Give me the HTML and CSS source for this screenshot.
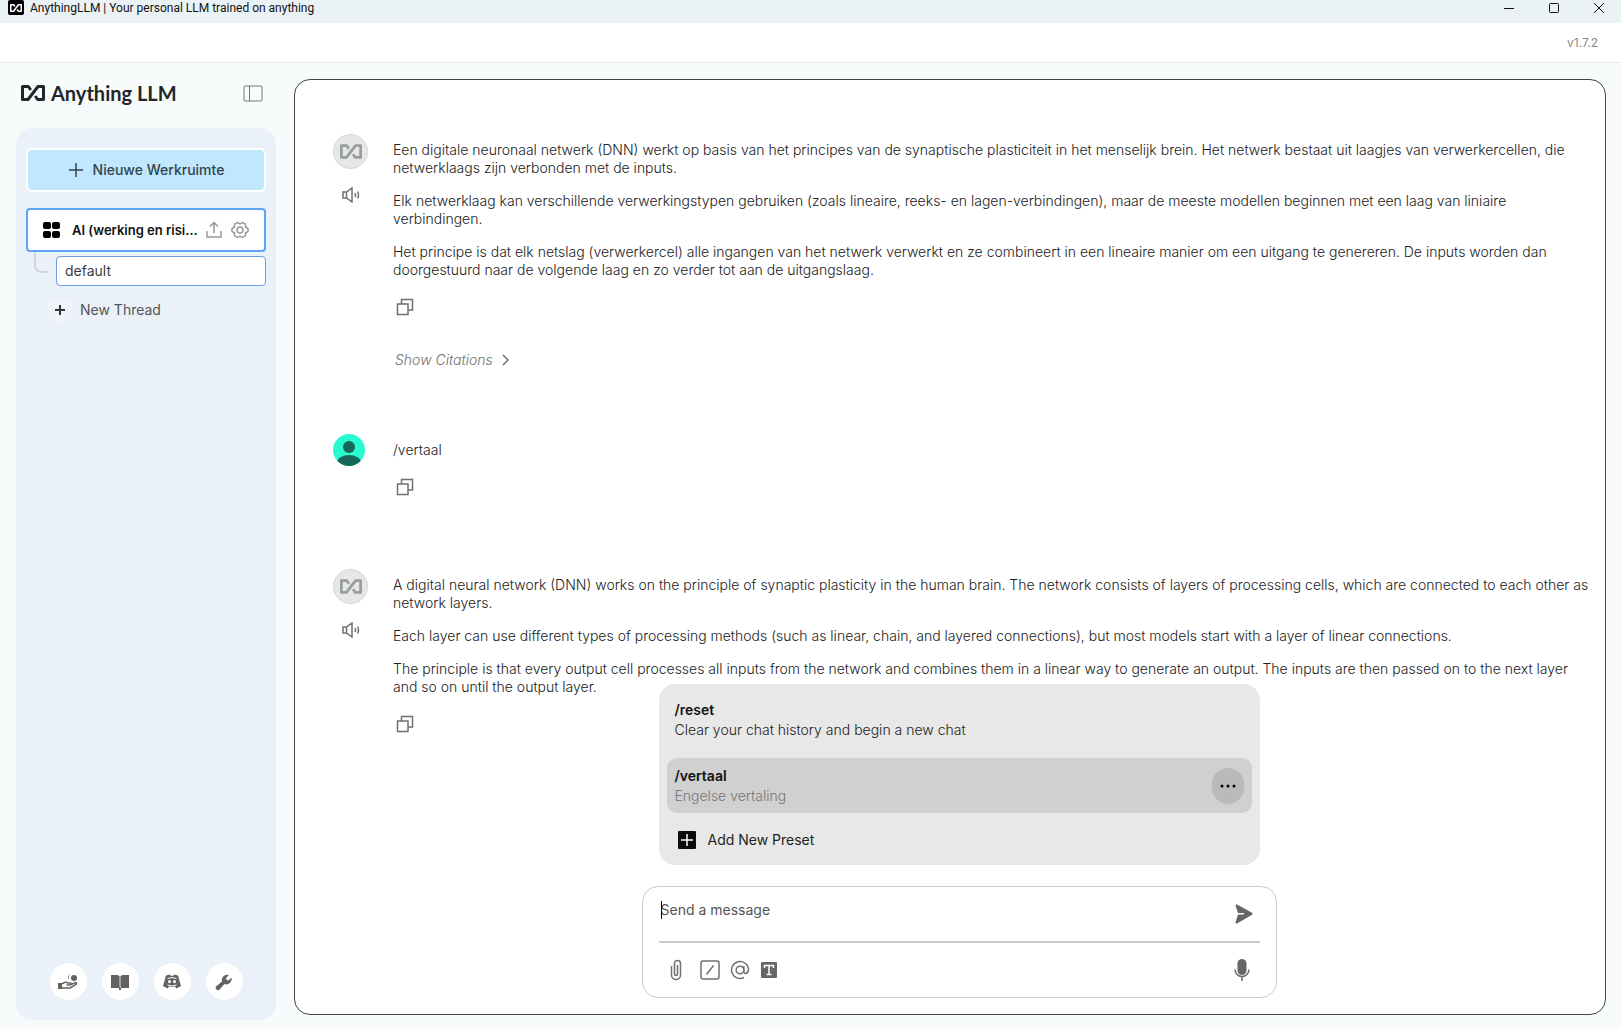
FILE: index.html
```html
<!DOCTYPE html>
<html lang="nl">
<head>
  <meta charset="UTF-8" />
  <meta name="viewport" content="width=device-width, initial-scale=1.0"/>
  <title>AnythingLLM | Your personal LLM trained on anything</title>
  <link rel="stylesheet" href="styles.css">
</head>
<body>
<!-- shared icons -->
<svg class="sprite" aria-hidden="true">
  <symbol id="mark" viewBox="0 0 24 16"><path d="M9.800 5 7.300 1.500H1.500V14.500H7L17 1.500H22.500V14.500H16.700L14.200 11" /></symbol>
  <symbol id="copy" viewBox="0 0 18 18"><path d="M1.500 6h10.500v10.500H1.500zM5.500 6V1.500h11v10.500H12" /></symbol>
  <symbol id="speaker" viewBox="0 0 18 16"><path d="M1 5h3.500L10 1v14L4.500 11H1zM4.500 5v6M13 6q1 2 0 4M15.500 4.500q2 3.500 0 7" /></symbol>
</svg>

<div class="titlebar">
  <span class="app-icon"><svg class="mark" width="12" height="8"><use href="#mark"/></svg></span>
  <span class="app-title">AnythingLLM | Your personal LLM trained on anything</span>
  <div class="window-buttons">
    <button aria-label="Minimize"><svg width="12" height="12"><path d="M1 6.500h10"/></svg></button>
    <button aria-label="Maximize"><svg width="12" height="12"><rect x="1.500" y="1.500" width="9" height="9" rx="1"/></svg></button>
    <button aria-label="Close"><svg width="12" height="12"><path d="M1 1l10 10M11 1L1 11"/></svg></button>
  </div>
</div>

<header><span class="version">v1.7.2</span></header>

<div class="layout">
  <aside>
    <div class="brand">
      <svg class="mark" width="24" height="16"><use href="#mark"/></svg>
      <span class="brand-name">Anything LLM</span>
      <button class="toggle" aria-label="Toggle sidebar"><svg width="20" height="17"><rect x="1" y="1" width="18" height="15" rx="1"/><path d="M6.500 1v15"/></svg></button>
    </div>

    <div class="sidebar">
      <button class="new-workspace">
        <svg width="16" height="16"><path d="M8 1v14M1 8h14"/></svg>
        Nieuwe Werkruimte
      </button>

      <div class="workspace">
        <svg class="grid-icon" width="18" height="18"><rect x="0" y="1" width="8" height="7" rx="2"/><rect x="9" y="1" width="8" height="7" rx="2"/><rect x="0" y="10" width="8" height="7" rx="2"/><rect x="9" y="10" width="8" height="7" rx="2"/></svg>
        <a href="#workspace">AI (werking en risi...</a>
        <button aria-label="Upload"><svg width="18" height="18"><path d="M2 10v6h14v-6M9 12V2M5 5.500 9 1.500l4 4"/></svg></button>
        <button aria-label="Settings"><svg width="18" height="18"><circle cx="9" cy="9" r="3"/><path d="M6.500 1.500 9 3l2.500-1.500 3 1.700V6L17 7.500v3L14.500 12v2.800l-3 1.700L9 15l-2.500 1.500-3-1.700V12L1 10.500v-3L3.500 6V3.200z"/></svg></button>
      </div>

      <div class="threads">
        <a class="thread active" href="#default">default</a>
        <button class="new-thread">
          <span><svg width="12" height="12"><path d="M6 1v10M1 6h10"/></svg></span>
          New Thread
        </button>
      </div>

      <nav>
        <a href="#support" aria-label="Support"><svg width="20" height="18" viewBox="0 0 20 18"><circle cx="16" cy="5" r="3"/><path d="M13.500 1A3.500 3.500 0 0 0 11 5.500L10 5.500A4 4 0 0 1 13.500 1z"/><path d="M0 10h4v6H0z"/><path class="line" d="M4 11q3-3 6-1h2.500q1.500 1.500-.5 2H8.500M13 11.500l4.500-2q2 .5.500 2L12 15H4"/></svg></a>
        <a href="#docs" aria-label="Docs"><svg width="20" height="18" viewBox="0 0 20 18"><path d="M1 2h6q2 0 2.600 1.500V15H1zM19 2h-6q-2 0-2.600 1.500V15H19zM9 14h2v3H9z"/></svg></a>
        <a href="#discord" aria-label="Discord"><svg width="20" height="18" viewBox="0 0 20 18"><path fill-rule="evenodd" d="M4 2.500 8 1.500l.5 1.300h3l.5-1.300 4 1 3 10.500-4.500 2.500-1.500-2q-3 .7-6 0l-1.500 2L1 13zM7.500 7a1.500 1.600 0 1 0 0 3.200 1.500 1.600 0 0 0 0-3.200M12.500 7a1.500 1.600 0 1 0 0 3.200 1.500 1.600 0 0 0 0-3.200"/><path class="cut" d="M5.500 5.500q4.500-2 9 0M5.500 12q4.500 2 9 0"/></svg></a>
        <a href="#settings" aria-label="Settings"><svg width="20" height="18" viewBox="0 0 20 18"><path d="M17.500 4.800 14.300 7.500 12.500 7 12 5.200 14.800 2A5.300 5.300 0 0 0 8 8.500L2.300 13.300a2.300 2.300 0 0 0 3.300 3.200L10.500 11A5.300 5.300 0 0 0 17.500 4.800z"/></svg></a>
      </nav>
    </div>
  </aside>

  <main>
    <div class="history">
      <article class="message">
        <div class="side">
          <span class="avatar"><svg class="mark" width="22" height="15"><use href="#mark"/></svg></span>
          <button aria-label="Speak"><svg class="icon" width="18" height="16"><use href="#speaker"/></svg></button>
        </div>
        <div class="body">
          <p>Een digitale neuronaal netwerk (DNN) werkt op basis van het principes van de synaptische plasticiteit in het menselijk brein. Het netwerk bestaat uit laagjes van verwerkercellen, die<br>netwerklaags zijn verbonden met de inputs.</p>
          <p>Elk netwerklaag kan verschillende verwerkingstypen gebruiken (zoals lineaire, reeks- en lagen-verbindingen), maar de meeste modellen beginnen met een laag van liniaire<br>verbindingen.</p>
          <p>Het principe is dat elk netslag (verwerkercel) alle ingangen van het netwerk verwerkt en ze combineert in een lineaire manier om een uitgang te genereren. De inputs worden dan<br>doorgestuurd naar de volgende laag en zo verder tot aan de uitgangslaag.</p>
          <button class="copy" aria-label="Copy"><svg class="icon" width="18" height="18"><use href="#copy"/></svg></button>
          <button class="citations">Show Citations <svg class="icon" width="8" height="12"><path d="M2 1l5 5-5 5"/></svg></button>
        </div>
      </article>

      <article class="message">
        <div class="side user">
          <svg width="32" height="32" viewBox="0 0 32 32"><clipPath id="round"><circle cx="16" cy="16" r="16"/></clipPath><g clip-path="url(#round)" stroke="none"><rect width="32" height="32" fill="#2afad0"/><g fill="#176658"><circle cx="16" cy="13" r="6"/><ellipse cx="16" cy="29" rx="12" ry="8"/></g></g></svg>
        </div>
        <div class="body">
          <p>/vertaal</p>
          <button class="copy" aria-label="Copy"><svg class="icon" width="18" height="18"><use href="#copy"/></svg></button>
        </div>
      </article>

      <article class="message">
        <div class="side">
          <span class="avatar"><svg class="mark" width="22" height="15"><use href="#mark"/></svg></span>
          <button aria-label="Speak"><svg class="icon" width="18" height="16"><use href="#speaker"/></svg></button>
        </div>
        <div class="body">
          <p>A digital neural network (DNN) works on the principle of synaptic plasticity in the human brain. The network consists of layers of processing cells, which are connected to each other as<br>network layers.</p>
          <p>Each layer can use different types of processing methods (such as linear, chain, and layered connections), but most models start with a layer of linear connections.</p>
          <p>The principle is that every output cell processes all inputs from the network and combines them in a linear way to generate an output. The inputs are then passed on to the next layer<br>and so on until the output layer.</p>
          <button class="copy" aria-label="Copy"><svg class="icon" width="18" height="18"><use href="#copy"/></svg></button>
        </div>
      </article>
    </div>

    <div class="prompt">
      <div class="commands">
        <button class="command">
          <strong>/reset</strong>
          <span>Clear your chat history and begin a new chat</span>
        </button>
        <div class="command selected">
          <div>
            <strong>/vertaal</strong>
            <span>Engelse vertaling</span>
          </div>
          <button class="more" aria-label="More"><svg width="18" height="4"><circle cx="3" cy="2" r="1.500"/><circle cx="9" cy="2" r="1.500"/><circle cx="15" cy="2" r="1.500"/></svg></button>
        </div>
        <button class="add-preset">
          <svg width="18" height="18"><rect width="18" height="18" rx="1"/><path d="M9 3v12M3 9h12"/></svg>
          Add New Preset
        </button>
      </div>

      <form class="composer">
        <div class="field">
          <span class="caret"></span>
          <textarea rows="1" aria-label="Message" placeholder="Send a message"></textarea>
          <button type="button" aria-label="Send"><svg class="solid" width="20" height="20"><path d="M1.500 1.500Q1.500 0 3 .6L18 8.700q1.500 1.100 0 2L3 19.500q-1.700.5-1.500-1.200L4 10.500h6v-1.500H4z"/></svg></button>
        </div>
        <div class="tools">
          <button type="button" class="attach" aria-label="Attach"><svg class="icon" width="12" height="22"><path d="M1.500 7v9a4.300 4.300 0 0 0 9 0V4.500a3 3 0 0 0-6 0V15a1.500 1.500 0 0 0 3 0V6"/></svg></button>
          <button type="button" aria-label="Slash commands"><svg class="icon" width="20" height="20"><rect x="1" y="1" width="18" height="18" rx="2"/><path d="M6.500 14.500l7-9"/></svg></button>
          <button type="button" aria-label="Agents"><svg class="icon" width="20" height="20"><circle cx="10" cy="10" r="3.800"/><path d="M13.800 6v5.500q.3 2.500 2.300 2 2.400-1 2.400-4.500A8.500 8.500 0 1 0 14 17.500"/></svg></button>
          <button type="button" aria-label="Text size"><svg class="solid" width="18" height="18"><rect x="1" y="1" width="16" height="16" rx="1"/><path class="letter" d="M4.500 7V4.500h9V7M9 4.500v9M6.500 13.500h5"/></svg></button>
          <button type="button" class="mic" aria-label="Microphone"><svg class="solid" width="16" height="22"><rect x="3.500" y="0" width="9" height="16" rx="4.500"/><path class="line" d="M1 10.500a7 7 0 0 0 14 0M8 18v4"/></svg></button>
        </div>
      </form>
    </div>
  </main>
</div>
</body>
</html>
```

FILE: styles.css
```css
* { box-sizing: border-box; }
body { font-family: Inter, "Open Sans", sans-serif; font-size: 14px; line-height: 18px; margin: 0; height: 100vh; display: flex; flex-direction: column; background: #f7fbfc; color: #3c3c3c; overflow: hidden; }
button { font: inherit; color: inherit; background: none; border: none; padding: 0; cursor: pointer; }
a { color: inherit; text-decoration: none; }
svg { display: block; flex: none; fill: none; stroke: currentColor; }
p { margin: 0 0 15px; }
.sprite { position: absolute; width: 0; height: 0; }
.mark { stroke-width: 3; stroke-linejoin: round; }
.icon { stroke: #707070; stroke-width: 1.5; }

.titlebar { display: flex; align-items: center; height: 23px; padding: 0 16px 8px 8px; background: #ebf2f6; color: #111; font-family: Roboto, sans-serif; font-size: 12px; }
.app-icon { width: 16px; height: 15px; background: #000; color: #fff; border-radius: 2px; display: flex; align-items: center; justify-content: center; }
.app-title { margin-left: 6px; }
.window-buttons { margin-left: auto; display: flex; gap: 33px; }

header { height: 40px; background: #fff; border-bottom: 1px solid #e6e9ea; display: flex; align-items: center; justify-content: flex-end; padding: 0 23px; }
.version { font-size: 12px; color: #888; }

.layout { flex: 1; min-height: 0; display: flex; gap: 18px; padding: 16px 15px 14px 16px; }
aside { width: 260px; flex: none; display: flex; flex-direction: column; margin-bottom: -5px; }
.brand { display: flex; align-items: center; height: 28px; padding: 0 13px 0 5px; color: #222628; margin-bottom: 21px; }
.brand-name { font-family: Lato, sans-serif; font-weight: 700; font-size: 20px; line-height: 28px; margin-left: 6px; }
.toggle { margin-left: auto; color: #777; }

.sidebar { flex: 1; min-height: 0; background: #eaf1f9; border-radius: 16px; padding: 20px 10px; display: flex; flex-direction: column; }
.new-workspace { height: 44px; background: #c0e7fd; border: 2px solid #fff; border-radius: 6px; display: flex; align-items: center; justify-content: center; gap: 9px; font-weight: 500; color: #33444e; margin-bottom: 16px; }
.new-workspace svg { stroke-width: 1.5; }
.workspace { height: 44px; background: #fff; border: 2px solid #5ea3f4; border-radius: 4px; display: flex; align-items: center; gap: 8px; padding: 0 15px; color: #999; }
.workspace a { flex: 1; min-width: 0; margin-left: 3px; white-space: nowrap; font-size: 13px; font-weight: 600; color: #111; }
.workspace svg { stroke-width: 1.5; }
.workspace .grid-icon { fill: #000; stroke: none; }
.threads { position: relative; padding: 4px 0 0 30px; }
.threads::before { content: ""; position: absolute; left: 8px; top: 0; width: 12px; height: 19px; border-left: 2px solid #d0d5da; border-bottom: 2px solid #d0d5da; border-bottom-left-radius: 8px; }
.thread { display: block; height: 30px; line-height: 28px; padding: 0 8px; background: #fff; border: 1px solid #6c9fe8; border-radius: 4px; }
.new-thread { display: flex; align-items: center; gap: 8px; margin: 12px 0 0 -8px; color: #555; }
.new-thread span { width: 24px; height: 24px; border-radius: 6px; background: #eef4f9; display: flex; align-items: center; justify-content: center; }
.new-thread svg { stroke: #333; stroke-width: 2; }
nav { margin-top: auto; display: flex; justify-content: center; gap: 15px; }
nav a { width: 37px; height: 37px; border-radius: 50%; background: #fff; color: #626262; display: flex; align-items: center; justify-content: center; }
nav svg { fill: currentColor; stroke: none; }
nav .line { fill: none; stroke: currentColor; stroke-width: 1.5; }
nav .cut { fill: none; stroke: #fff; stroke-width: 1; }

main { position: relative; flex: 1; min-width: 0; background: #fff; border: 1px solid #444; border-radius: 16px; overflow: hidden; }
.history { padding: 54px 24px 0 38px; }
.message { display: flex; gap: 25px; }
.message + .message { margin-top: 65px; }
.message:last-child { margin-top: 73px; }
.side { width: 35px; flex: none; display: flex; flex-direction: column; align-items: center; gap: 18px; }
.side.user { align-items: flex-start; }
.avatar { width: 35px; height: 35px; border: 1px solid #d5d5d5; border-radius: 50%; background: #e6e7e7; color: #999d9d; display: flex; align-items: center; justify-content: center; }
.body { flex: 1; min-width: 0; padding-top: 7px; white-space: nowrap; font-weight: 300; color: #222; }
.copy { display: block; margin: 19px 0 0 3px; }
.citations { display: flex; align-items: center; gap: 8px; margin: 35px 0 0 2px; font-style: italic; color: #707070; }

.prompt { position: absolute; left: 18px; right: 0; bottom: 16px; display: flex; flex-direction: column; align-items: center; gap: 21px; }
.commands { width: 601px; max-width: 100%; background: #e8e8e8; border-radius: 16px; padding: 8px; display: flex; flex-direction: column; }
.command { display: flex; flex-direction: column; align-items: flex-start; height: 55px; padding: 8px; text-align: left; line-height: 20px; }
.command strong, .command span { display: block; }
.command span { font-weight: 300; color: #222; }
.command strong { font-weight: 600; color: #111; }
.command.selected { flex-direction: row; justify-content: space-between; align-items: center; margin-top: 11px; background: #d0d0d0; border-radius: 10px; }
.command.selected span { color: #777; }
.more { width: 32px; height: 36px; border-radius: 16px; background: #bababa; display: flex; align-items: center; justify-content: center; }
.more svg { fill: #000; stroke: none; }
.add-preset { display: flex; align-items: center; gap: 12px; height: 38px; margin: 8px 0 -2px; padding: 0 11px; color: #222; }
.add-preset rect { fill: #0c0c0c; stroke: none; }
.add-preset path { stroke: #fff; stroke-width: 1.5; }

.composer { width: 635px; max-width: 100%; height: 112px; border: 1px solid #c9c9c9; border-radius: 16px; background: #fff; padding: 0 16px; }
.field { position: relative; height: 56px; border-bottom: 2px solid #c9c9c9; display: flex; align-items: center; justify-content: space-between; padding-right: 6px; }
.field textarea { flex: 1; height: 28px; margin-bottom: 8px; padding: 4px 2px; border: none; outline: none; resize: none; background: none; font: inherit; line-height: 20px; }
.field textarea::placeholder { color: #555; opacity: 1; }
.caret { position: absolute; left: 2px; top: 14px; width: 1px; height: 18px; background: #000; }
.tools { display: flex; align-items: center; height: 54px; gap: 10px; padding: 0 10px 0 11px; }
.attach { margin-right: 8px; }
.mic { margin-left: auto; }
.solid { fill: #666; stroke: none; }
.solid .line { fill: none; stroke: #666; stroke-width: 1.5; }
.solid .letter { fill: none; stroke: #fff; stroke-width: 1.5; }
```
